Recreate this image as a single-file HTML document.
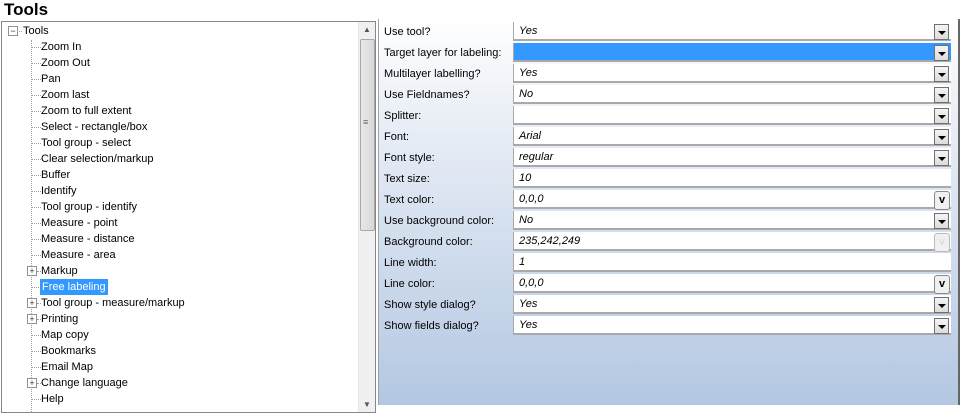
<!DOCTYPE html>
<html><head><style>
body{margin:0;width:960px;height:405px;overflow:hidden;background:#fff;font-family:"Liberation Sans",sans-serif;font-size:11px;color:#000;position:relative}
.t{position:absolute;left:4px;top:0;font-size:17px;font-weight:bold;line-height:20px}
.tree{position:absolute;left:1px;top:21px;width:373px;height:390px;border:1px solid #828790;overflow:hidden}
.it{position:absolute;height:16px;line-height:16px;white-space:nowrap}
.dot{position:absolute;border-top:1px dotted #a0a0a0;width:9px}
.vl{position:absolute;left:29px;top:18px;height:380px;border-left:1px dotted #a0a0a0}
.box{position:absolute;width:8px;height:8px;border:1px solid #919191;background:#fff;font-size:9px;line-height:8px;text-align:center;color:#333}
.sb{position:absolute;left:356px;top:0;width:17px;height:390px;background:#f0f0f0;border-left:1px solid #e6e6e6}
.thumb{position:absolute;left:358px;top:17px;width:13px;height:190px;background:linear-gradient(90deg,#e8e8e8,#d8d8d8);border:1px solid #a8a8a8;border-radius:2px}
.rp{position:absolute;left:378px;top:19px;width:579px;height:386px;background:linear-gradient(180deg,#fff 0%,#eef2f8 20%,#b3c7e2 100%);border-left:1px solid #a0a0a0;border-right:2px solid #666}
.lab{position:absolute;left:384px;height:21px;line-height:21px}
.f{position:absolute;left:513px;width:438px;height:19px;background:#fff;border-bottom:2px solid #a9a9a9;border-left:1px solid #a9a9a9;font-style:italic;line-height:19px;padding-left:5px;box-sizing:border-box}
.dd{position:absolute;right:2px;top:2px;width:13px;height:14px;border:1px solid #707070;background:linear-gradient(#f4f4f4,#dcdcdc)}
.dd:after{content:"";position:absolute;left:3px;top:6px;border-left:4px solid transparent;border-right:4px solid transparent;border-top:4px solid #000}
.vb{position:absolute;right:1px;top:1px;width:14px;height:17px;border:1px solid #8a8a8a;border-radius:3px;background:#f0f0f0;font-weight:bold;font-style:normal;text-align:center;line-height:17px;font-size:11px}
</style></head><body>
<div class="t">Tools</div>
<div class="tree">
<div class="vl"></div>
<div class="box" style="left:6px;top:4px">−</div><div class="dot" style="left:15px;top:9px;width:5px"></div>
<div class="it" style="left:21px;top:1px">Tools</div>
<div class="sb"></div><div class="thumb"></div>
<div style="position:absolute;left:361px;top:3px;font-size:8px;color:#555">▲</div>
<div style="position:absolute;left:361px;top:378px;font-size:8px;color:#555">▼</div>
<div style="position:absolute;left:361px;top:95px;font-size:9px;color:#666">≡</div>
<div id="items"></div>
</div>
<div class="rp"></div>
<script>
var it=["Zoom In","Zoom Out","Pan","Zoom last","Zoom to full extent","Select - rectangle/box","Tool group - select","Clear selection/markup","Buffer","Identify","Tool group - identify","Measure - point","Measure - distance","Measure - area","+Markup","*Free labeling","+Tool group - measure/markup","+Printing","Map copy","Bookmarks","Email Map","+Change language","Help"];
var h="";it.forEach(function(s,i){var y=16*(i+1)+1;var pl=s[0]=="+",sel=s[0]=="*";if(pl||sel)s=s.slice(1);
if(pl)h+='<div class="box" style="left:25px;top:'+(y+3)+'px">+</div><div class="dot" style="left:35px;top:'+(y+8)+'px;width:4px"></div>';
else h+='<div class="dot" style="left:30px;top:'+(y+8)+'px"></div>';
h+='<div class="it" style="left:39px;top:'+y+'px;'+(sel?'background:#3399ff;color:#fff;padding:0 2px;left:38px':'')+'">'+s+'</div>';});
document.getElementById("items").innerHTML=h;
var r=[["Use tool?","Yes","d"],["Target layer for labeling:","","s"],["Multilayer labelling?","Yes","d"],["Use Fieldnames?","No","d"],["Splitter:","","d"],["Font:","Arial","d"],["Font style:","regular","d"],["Text size:","10",""],["Text color:","0,0,0","v"],["Use background color:","No","d"],["Background color:","235,242,249","g"],["Line width:","1",""],["Line color:","0,0,0","v"],["Show style dialog?","Yes","d"],["Show fields dialog?","Yes","d"]];
var o="";r.forEach(function(a,i){var y=21+21*i;o+='<div class="lab" style="top:'+(y+1)+'px">'+a[0]+'</div>';
var bg=a[2]=="s"?'background:#3399ff;':'';
o+='<div class="f" style="top:'+(y+1)+'px;'+bg+'">'+a[1];
if(a[2]=="d"||a[2]=="s")o+='<div class="dd"></div>';
if(a[2]=="v")o+='<div class="vb">v</div>';
if(a[2]=="g")o+='<div class="vb" style="color:#ddd;border-color:#bbb">v</div>';
o+='</div>';});
document.body.insertAdjacentHTML("beforeend",o);
</script>
</body></html>
